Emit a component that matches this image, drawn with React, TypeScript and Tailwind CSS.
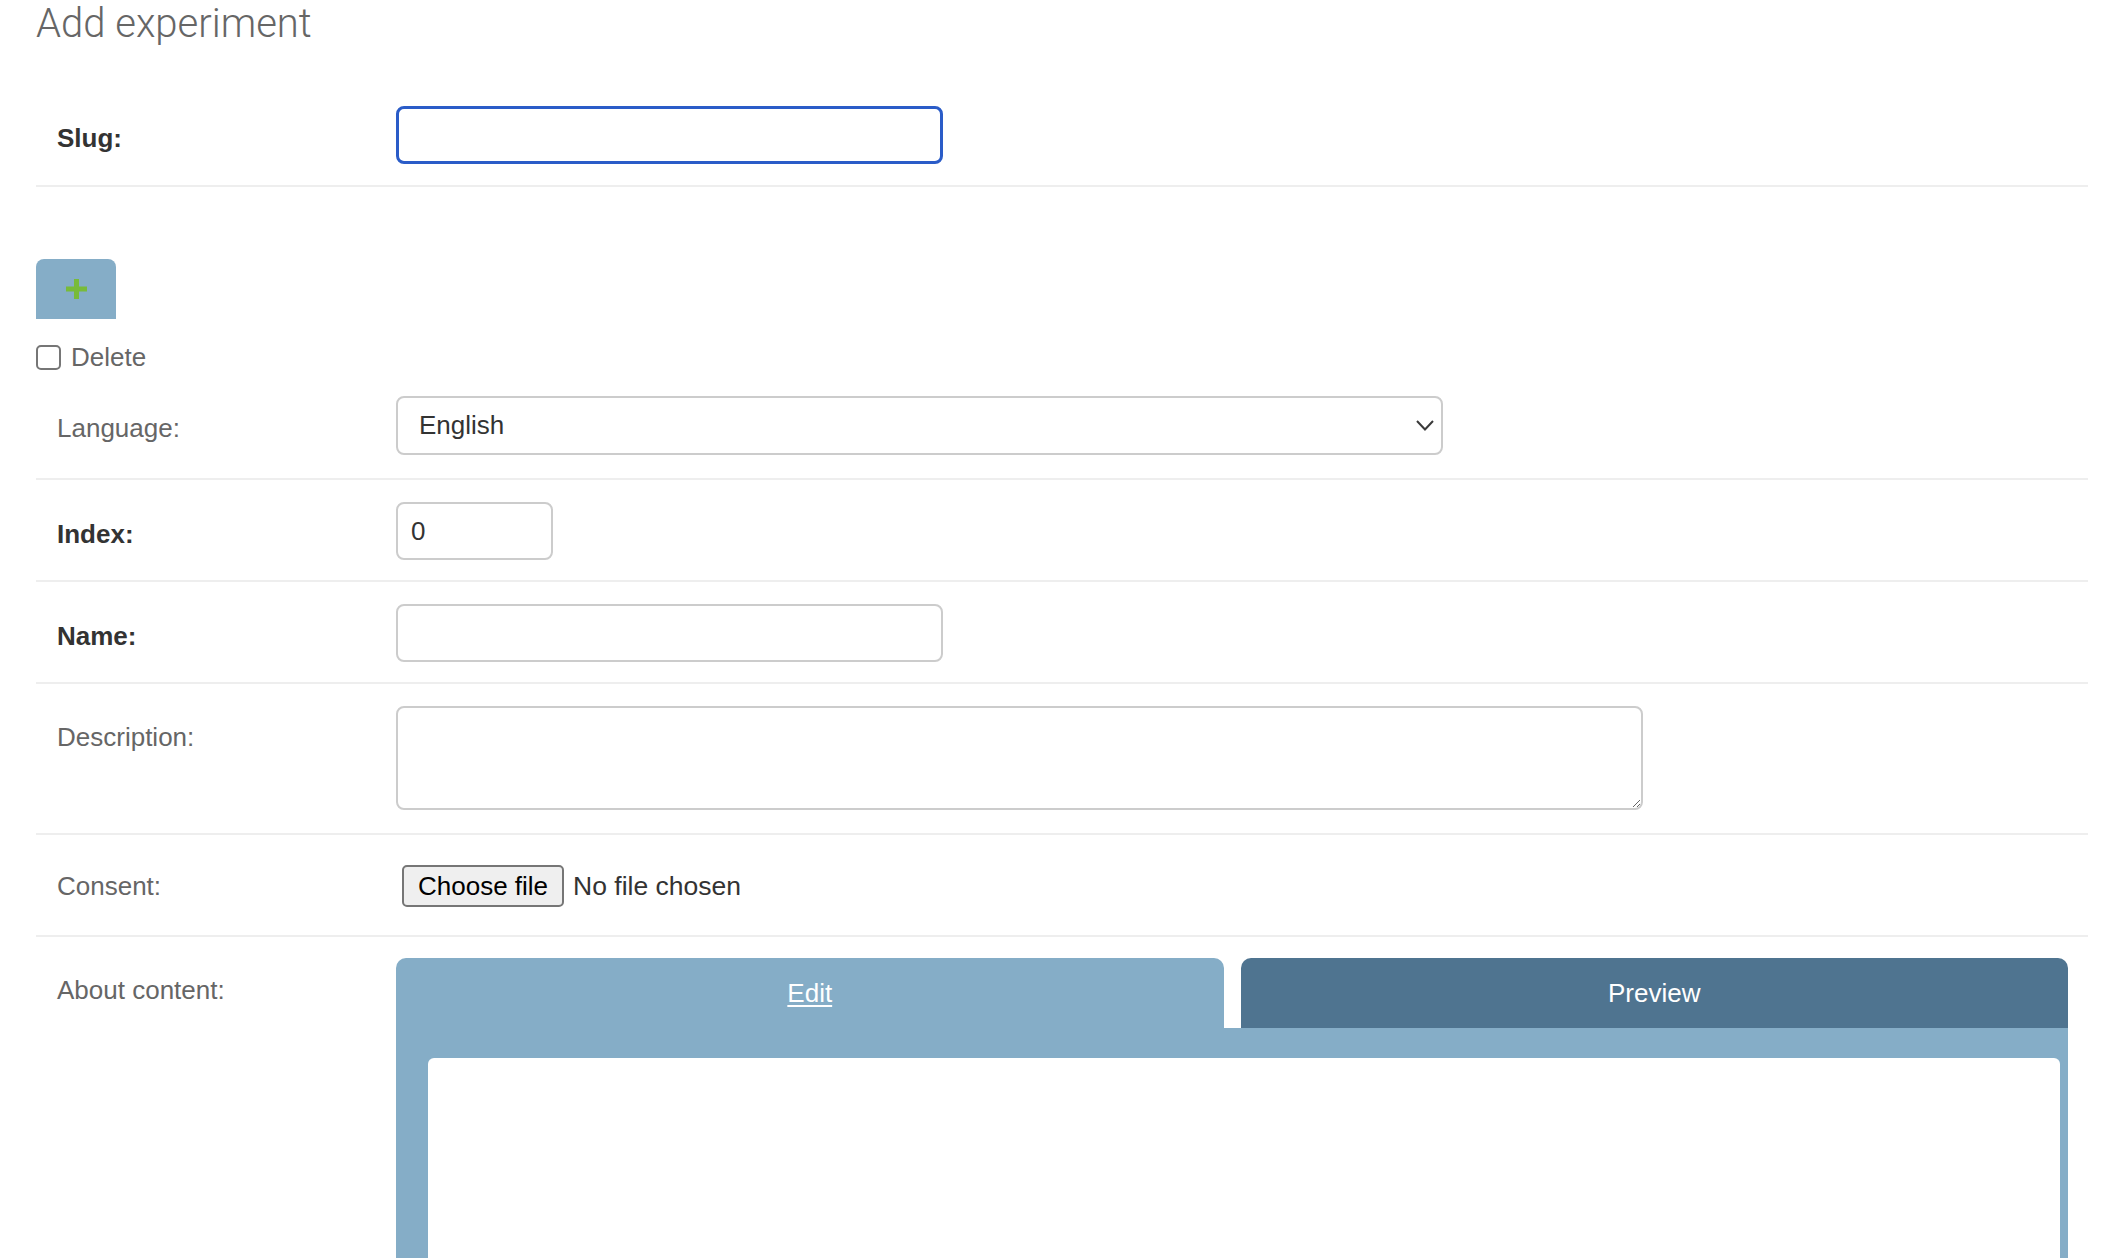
import React from "react";

function Label({ children, bold = false, top = "pt-[17px]" }: { children: React.ReactNode; bold?: boolean; top?: string }) {
  return (
    <div className={`w-[360px] shrink-0 pl-[21px] ${top}`}>
      <label className={`block text-[26px] leading-[30px] ${bold ? "font-bold text-[#333]" : "text-[#666]"}`}>
        {children}
      </label>
    </div>
  );
}

export default function App() {
  return (
    <div className="min-h-screen bg-white pl-[36px] pr-[24px] font-['Liberation_Sans',Arial,sans-serif] overflow-hidden">
      <h1 className="pt-[2px] font-['Roboto',sans-serif] font-light text-[40px] leading-[44px] text-[#666]">
        Add experiment
      </h1>

      {/* slug */}
      <div className="mt-[39px] flex border-b-2 border-[#eee] py-[21px]">
        <Label bold>Slug:</Label>
        <input
          type="text"
          className="h-[58px] w-[547px] rounded-[8px] border-[3px] border-[#2a5cc8] px-[12px] text-[26px] text-[#333] outline-none"
        />
      </div>

      {/* inline group */}
      <div className="mt-[72px]">
        <button
          type="button"
          className="flex h-[60px] w-[80px] items-center justify-center rounded-t-[8px] bg-[#85adc7]"
        >
          <svg width="21" height="20" viewBox="0 0 21 20">
            <rect x="8" y="0" width="5" height="20" fill="#78bb3a" />
            <rect x="0" y="7.5" width="21" height="5" fill="#78bb3a" />
          </svg>
        </button>

        <div className="mt-[25px] flex h-[26px] items-center gap-[10px]">
          <span className="block h-[25px] w-[25px] rounded-[5px] border-2 border-[#767676] bg-white" />
          <span className="text-[26px] leading-[30px] text-[#666]">Delete</span>
        </div>

        {/* language */}
        <div className="flex border-b-2 border-[#eee] pt-[26px] pb-[23px]">
          <Label>Language:</Label>
          <div className="flex h-[59px] w-[1047px] items-center justify-between rounded-[8px] border-2 border-[#ccc] pl-[21px] pr-[7px] text-[26px] text-[#333]">
            <span>English</span>
            <svg width="18" height="11" viewBox="0 0 18 11" fill="none">
              <polyline points="1,1 9,9.5 17,1" stroke="#3a3a3a" strokeWidth="2" />
            </svg>
          </div>
        </div>

        {/* index */}
        <div className="flex border-b-2 border-[#eee] pt-[22px] pb-[20px]">
          <Label bold>Index:</Label>
          <input
            type="text"
            defaultValue="0"
            className="h-[58px] w-[157px] rounded-[8px] border-2 border-[#ccc] px-[13px] text-[26px] text-[#333] outline-none"
          />
        </div>

        {/* name */}
        <div className="flex border-b-2 border-[#eee] pt-[22px] pb-[20px]">
          <Label bold>Name:</Label>
          <input
            type="text"
            className="h-[58px] w-[547px] rounded-[8px] border-2 border-[#ccc] px-[13px] text-[26px] text-[#333] outline-none"
          />
        </div>

        {/* description */}
        <div className="flex border-b-2 border-[#eee] pt-[22px] pb-[23px]">
          <Label top="pt-[16px]">Description:</Label>
          <textarea className="block h-[104px] w-[1247px] rounded-[8px] border-2 border-[#ccc] px-[13px] text-[26px] text-[#333] outline-none" />
        </div>

        {/* consent */}
        <div className="flex items-center border-b-2 border-[#eee] pt-[22px] pb-[20px]">
          <Label top="pt-0">Consent:</Label>
          <div className="flex h-[58px] items-center gap-[9px] pl-[6px]">
            <button
              type="button"
              className="h-[42px] rounded-[5px] border-2 border-[#767676] bg-[#efefef] px-[14px] text-[26px] leading-[30px] text-black"
            >
              Choose file
            </button>
            <span className="text-[26.5px] leading-[30px] text-[#333]">No file chosen</span>
          </div>
        </div>

        {/* about content */}
        <div className="flex pt-[21px]">
          <Label>About content:</Label>
          <div className="w-[1672px]">
            <div className="flex gap-[17px]">
              <div className="flex h-[70px] flex-1 items-center justify-center rounded-t-[10px] bg-[#85adc7]">
                <a className="text-[26px] leading-[30px] text-white underline underline-offset-[3px]">Edit</a>
              </div>
              <div className="flex h-[70px] flex-1 items-center justify-center rounded-t-[10px] bg-[#4f7490]">
                <span className="text-[26px] leading-[30px] text-white">Preview</span>
              </div>
            </div>
            <div className="bg-[#85adc7] pt-[30px] pl-[32px] pr-[8px]">
              <div className="h-[400px] rounded-t-[6px] bg-white" />
            </div>
          </div>
        </div>
      </div>
    </div>
  );
}
